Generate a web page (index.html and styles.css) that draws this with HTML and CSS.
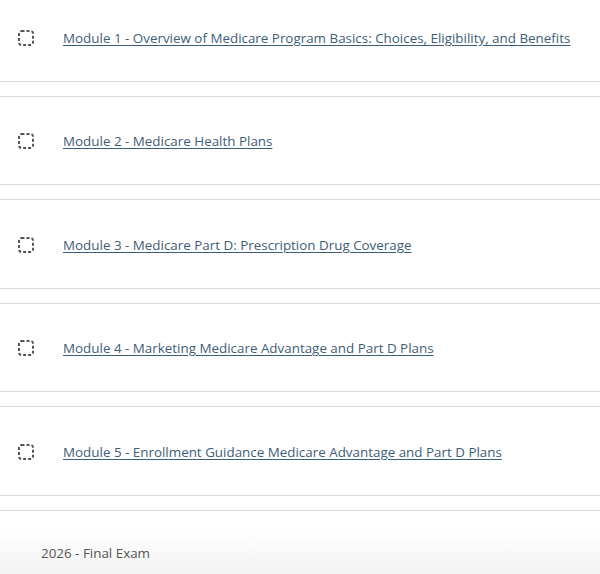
FILE: index.html
```html
<!DOCTYPE html>
<html>
<head>
<meta charset="utf-8">
<link rel="stylesheet" href="styles.css">
</head>
<body>
<div class="list">
  <div class="card">
    <span class="check"><svg width="16" height="16" viewBox="0 0 16 16"><rect x="1" y="1" width="14" height="14" rx="2.5" fill="none" stroke="#555" stroke-width="2" stroke-dasharray="3 2"/></svg></span>
    <a class="title" href="#">Module 1 - Overview of Medicare Program Basics: Choices, Eligibility, and Benefits</a>
  </div>
  <div class="card">
    <span class="check"><svg width="16" height="16" viewBox="0 0 16 16"><rect x="1" y="1" width="14" height="14" rx="2.5" fill="none" stroke="#555" stroke-width="2" stroke-dasharray="3 2"/></svg></span>
    <a class="title" href="#">Module 2 - Medicare Health Plans</a>
  </div>
  <div class="card">
    <span class="check"><svg width="16" height="16" viewBox="0 0 16 16"><rect x="1" y="1" width="14" height="14" rx="2.5" fill="none" stroke="#555" stroke-width="2" stroke-dasharray="3 2"/></svg></span>
    <a class="title" href="#">Module 3 - Medicare Part D: Prescription Drug Coverage</a>
  </div>
  <div class="card">
    <span class="check"><svg width="16" height="16" viewBox="0 0 16 16"><rect x="1" y="1" width="14" height="14" rx="2.5" fill="none" stroke="#555" stroke-width="2" stroke-dasharray="3 2"/></svg></span>
    <a class="title" href="#">Module 4 - Marketing Medicare Advantage and Part D Plans</a>
  </div>
  <div class="card">
    <span class="check"><svg width="16" height="16" viewBox="0 0 16 16"><rect x="1" y="1" width="14" height="14" rx="2.5" fill="none" stroke="#555" stroke-width="2" stroke-dasharray="3 2"/></svg></span>
    <a class="title" href="#">Module 5 - Enrollment Guidance Medicare Advantage and Part D Plans</a>
  </div>
  <div class="card final">
    <span class="exam">2026 - Final Exam</span>
  </div>
</div>
<div class="fade"></div>
</body>
</html>
```
FILE: styles.css
```css
html, body {
  margin: 0;
  padding: 0;
  background: #fff;
  overflow: hidden;
  height: 574px;
}
body {
  font-family: "Open Sans", "Liberation Sans", sans-serif;
  position: relative;
}
.list {
  display: flex;
  flex-direction: column;
  gap: 14px;
  margin-top: -8px;
}
.card {
  box-sizing: border-box;
  height: 89.5px;
  border-top: 1.5px solid #d9d9d9;
  border-bottom: 1.5px solid #d9d9d9;
  display: flex;
  align-items: center;
  padding-left: 18px;
  padding-top: 2px;
}
.check {
  width: 16px;
  height: 16px;
  display: flex;
  margin-right: 29px;
}
.title {
  color: #3e5d78;
  font-size: 13.4px;
  text-decoration: underline;
  text-underline-offset: 2px;
}
.final {
  border-bottom: none;
  align-items: flex-start;
  padding-left: 41px;
  padding-top: 33px;
  position: relative;
  z-index: 2;
}
.exam {
  color: #555;
  font-size: 13.4px;
}
.fade {
  position: absolute;
  left: 0;
  right: 0;
  bottom: 0;
  height: 45px;
  background: linear-gradient(to bottom, rgba(242,242,242,0), rgba(242,242,242,1));
  pointer-events: none;
  z-index: 1;
}
```
